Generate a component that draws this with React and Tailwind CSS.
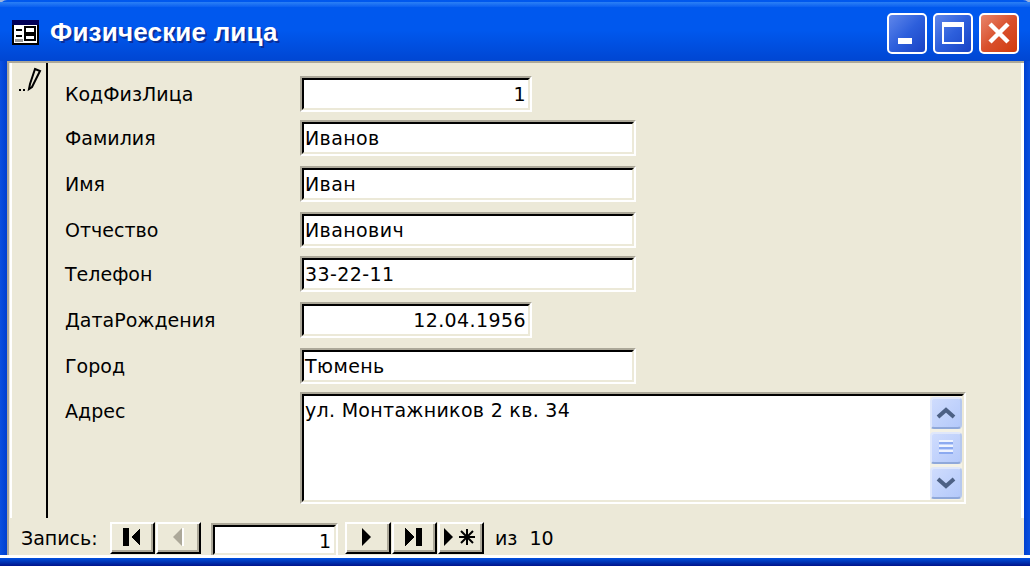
const font = { fontFamily: '"DejaVu Sans", sans-serif' };

function Field({ label, value, right, wide, className }) {
  return (
    <div className={`flex items-center h-9 ${className}`}>
      <div className="w-[252px] pl-[17px] text-[19px] text-black">{label}</div>
      <Box width={wide ? "w-[336px]" : "w-[232px]"} right={right} value={value} />
    </div>
  );
}

function Box({ width, right, value }) {
  return (
    <div className={`${width} h-9 border-2 border-t-[#aca899] border-l-[#aca899] border-r-white border-b-white`}>
      <div className={`h-full border-2 border-t-black border-l-black border-r-[#ece9d8] border-b-[#ece9d8] bg-white flex items-center text-[19px] leading-none tracking-[0.4px] text-black ${right ? "justify-end pr-[2px]" : "pl-[1px]"}`}>
        {value}
      </div>
    </div>
  );
}

function TitleButton({ children, className }) {
  return (
    <div className={`w-[40px] h-[41px] rounded-[5px] border-2 border-white flex items-center justify-center ${className}`}>
      {children}
    </div>
  );
}

function NavButton({ width, children }) {
  return (
    <div className={`${width} h-[32px] border-2 border-t-white border-l-white border-r-black border-b-black`}>
      <div className="h-full border-r-2 border-b-2 border-r-[#aca899] border-b-[#aca899] bg-[#ece9d8] flex items-center justify-center">
        {children}
      </div>
    </div>
  );
}

function ScrollButton({ children, className }) {
  return (
    <div className={`w-[32px] h-[32px] rounded-[4px] border-2 border-t-[#dfe7fb] border-l-[#dfe7fb] border-r-[#b6c8ee] border-b-[#8fa8da] bg-gradient-to-br from-[#cfdcfd] to-[#b4c9fa] flex items-center justify-center ${className}`}>
      {children}
    </div>
  );
}

export default function App() {
  return (
    <div style={font} className="w-[1030px] h-[566px] overflow-hidden bg-[#9db4dc] flex flex-col">
      <div className="h-[61px] shrink-0 rounded-t-[7px] bg-gradient-to-b from-[#0058ee] via-[#0058ee] to-[#0046d2] flex items-center relative">
        <div className="absolute inset-x-0 top-[2px] h-[5px] bg-gradient-to-b from-[#2b80f5] to-[#0a5ff0]" />
        <svg width="27" height="25" viewBox="0 0 27 25" className="ml-[12px] mt-[3px]" shapeRendering="crispEdges">
          <rect width="27" height="25" fill="#000" />
          <rect x="2" y="5" width="23" height="18" fill="#fff" />
          <rect y="0" width="27" height="5" fill="#000058" />
          <rect x="4" y="9" width="6" height="2" fill="#000" />
          <rect x="4" y="15" width="6" height="2" fill="#000" />
          <rect x="13" y="7" width="10" height="6" fill="none" stroke="#000" strokeWidth="2" />
          <rect x="13" y="15" width="10" height="5" fill="none" stroke="#000" strokeWidth="2" />
          <rect x="3" y="19" width="8" height="3" fill="#9a9a9a" />
        </svg>
        <div style={{ fontFamily: '"Liberation Sans", sans-serif' }} className="ml-[11px] mt-[3px] text-white font-bold text-[26px] leading-none tracking-[0.2px] [text-shadow:2px_2px_0_#0a2f9a]">Физические лица</div>
        <div className="ml-auto mr-[11px] mt-[5px] flex gap-[6px]">
          <TitleButton className="bg-gradient-to-br from-[#5f86ea] via-[#2d5fdc] to-[#1a43c4]">
            <div className="w-[14px] h-[6px] bg-white mt-[15px] mr-[4px]" />
          </TitleButton>
          <TitleButton className="bg-gradient-to-br from-[#5f86ea] via-[#2d5fdc] to-[#1a43c4]">
            <div className="w-[22px] h-[22px] border-2 border-t-[5px] border-white" />
          </TitleButton>
          <TitleButton className="bg-gradient-to-br from-[#e8846a] via-[#d9502c] to-[#d13a08]">
            <svg width="24" height="24" viewBox="0 0 24 24">
              <path d="M3 3 L21 21 M21 3 L3 21" stroke="#fff" strokeWidth="4.5" />
            </svg>
          </TitleButton>
        </div>
      </div>

      <div className="flex-1 flex bg-[#0048d8] min-h-0">
        <div className="w-[7px] shrink-0 bg-gradient-to-r from-[#0a50e0] to-[#0040d0]" />
        <div className="w-[1017px] h-[494px] shrink-0 flex flex-col bg-[#ece9d8] border-t-2 border-l-2 border-t-[#aca899] border-l-[#aca899]">
          <div className="flex h-[455px] shrink-0 border-r-[3px] border-r-white">
            <div className="w-[37px] shrink-0 relative pl-[1px]">
              <div className="h-full border-l-2 border-l-white" />
              <svg width="26" height="26" viewBox="0 0 26 26" className="absolute left-[8px] top-[4px]">
                <path d="M18 2 L23 4 L15 20 L12 22 L13 17 Z" fill="none" stroke="#000" strokeWidth="2" />
                <rect x="2" y="22" width="2" height="2" fill="#000" />
                <rect x="6" y="22" width="2" height="2" fill="#000" />
              </svg>
            </div>
            <div className="flex-1 border-l-2 border-l-black pt-[13px]">
              <Field label="КодФизЛица" value="1" right />
              <Field label="Фамилия" value="Иванов" wide className="mt-[8px]" />
              <Field label="Имя" value="Иван" wide className="mt-[10px]" />
              <Field label="Отчество" value="Иванович" wide className="mt-[10px]" />
              <Field label="Телефон" value="33-22-11" wide className="mt-[8px]" />
              <Field label="ДатаРождения" value="12.04.1956" right className="mt-[10px]" />
              <Field label="Город" value="Тюмень" wide className="mt-[10px]" />
              <div className="flex mt-[8px]">
                <div className="w-[252px] pl-[17px] pt-[5px] text-[19px] text-black">Адрес</div>
                <div className="w-[666px] h-[112px] border-2 border-t-[#aca899] border-l-[#aca899] border-r-white border-b-white">
                  <div className="h-full border-2 border-t-black border-l-black border-r-[#ece9d8] border-b-[#ece9d8] bg-white flex">
                    <div className="flex-1 pl-[1px] pt-[2px] text-[19px] leading-[24px] tracking-[0.3px] text-black">ул. Монтажников 2 кв. 34</div>
                    <div className="w-[32px] shrink-0 bg-[#f3f1e6] flex flex-col gap-[3px] pt-[1px]">
                      <ScrollButton>
                        <svg width="20" height="12" viewBox="0 0 20 12"><path d="M2 10 L10 3 L18 10" fill="none" stroke="#4d6185" strokeWidth="4" /></svg>
                      </ScrollButton>
                      <ScrollButton>
                        <svg width="14" height="16" viewBox="0 0 14 16" shapeRendering="crispEdges">
                          <rect width="14" height="2" y="0" fill="#eef3fe" /><rect width="14" height="2" y="2" fill="#8caaf0" />
                          <rect width="14" height="2" y="5" fill="#eef3fe" /><rect width="14" height="2" y="7" fill="#8caaf0" />
                          <rect width="14" height="2" y="10" fill="#eef3fe" /><rect width="14" height="2" y="12" fill="#8caaf0" />
                        </svg>
                      </ScrollButton>
                      <ScrollButton>
                        <svg width="20" height="12" viewBox="0 0 20 12"><path d="M2 2 L10 9 L18 2" fill="none" stroke="#4d6185" strokeWidth="4" /></svg>
                      </ScrollButton>
                    </div>
                  </div>
                </div>
              </div>
            </div>
          </div>
          <div className="flex-1 flex items-start pt-[4px] text-[19px] text-black leading-none">
            <div className="w-[101px] pl-[12px] pt-[7px] shrink-0">Запись:</div>
            <div className="flex gap-[1px]">
              <NavButton width="w-[45px]">
                <svg width="20" height="18" viewBox="0 0 20 18" shapeRendering="crispEdges"><rect x="1" y="0" width="6" height="18" /><path d="M18 0 L18 18 L9 9 Z" /></svg>
              </NavButton>
              <NavButton width="w-[45px]">
                <svg width="14" height="18" viewBox="0 0 14 18"><path d="M11 0 L11 18 L2 9 Z" fill="#aca899" /><rect x="11" y="0" width="2" height="18" fill="#fff" /></svg>
              </NavButton>
            </div>
            <div className="ml-[10px] mt-[1px] w-[127px] h-[32px] border-t-2 border-x-2 border-t-[#aca899] border-l-[#aca899] border-r-white">
              <div className="h-full border-2 border-t-black border-l-black border-r-[#ece9d8] border-b-[#ece9d8] bg-white flex items-center justify-end pr-[3px] pt-[2px]">1</div>
            </div>
            <div className="ml-[7px] flex gap-[1px]">
              <NavButton width="w-[46px]">
                <svg width="12" height="18" viewBox="0 0 12 18"><path d="M1 0 L1 18 L10 9 Z" /></svg>
              </NavButton>
              <NavButton width="w-[45px]">
                <svg width="20" height="18" viewBox="0 0 20 18" shapeRendering="crispEdges"><path d="M1 0 L1 18 L10 9 Z" /><rect x="12" y="0" width="6" height="18" /></svg>
              </NavButton>
              <NavButton width="w-[46px]">
                <svg width="34" height="18" viewBox="0 0 34 18"><path d="M1 0 L1 18 L10 9 Z" /><path d="M24 1 V17 M16 9 H32 M18 3 L30 15 M30 3 L18 15" stroke="#000" strokeWidth="2" /></svg>
              </NavButton>
            </div>
            <div className="ml-[11px] pt-[7px] whitespace-pre">из  10</div>
          </div>
        </div>
        <div className="flex-1 bg-gradient-to-r from-[#0040d0] to-[#0a50e0]" />
      </div>
      <div className="h-[11px] shrink-0 bg-gradient-to-b from-[#0050e0] to-[#00138c] border-t-[3px] border-t-white" />
    </div>
  );
}
